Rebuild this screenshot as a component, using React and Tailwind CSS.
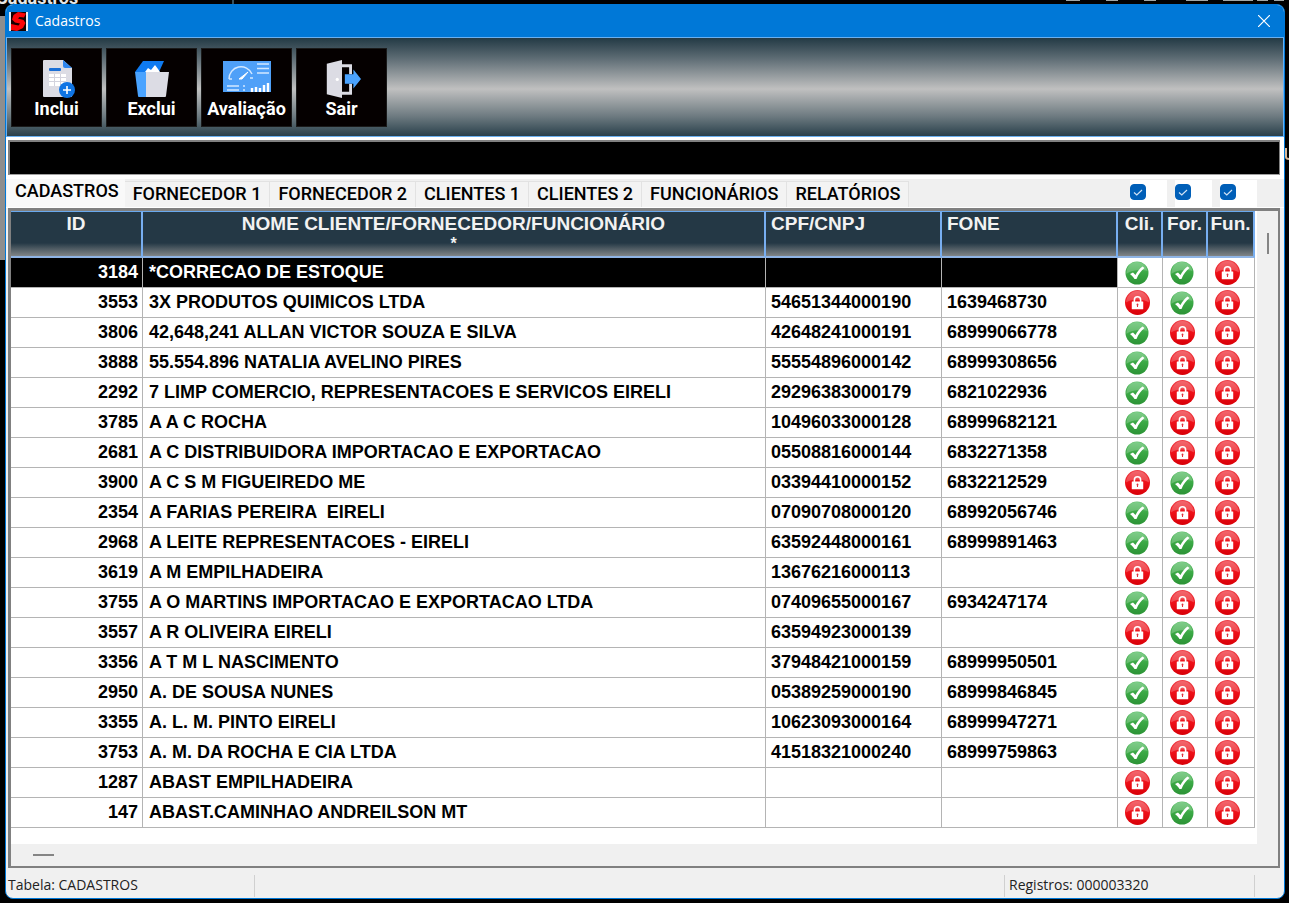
import React, { useState } from 'react';

const tabs = ['CADASTROS', 'FORNECEDOR 1', 'FORNECEDOR 2', 'CLIENTES 1', 'CLIENTES 2', 'FUNCIONÁRIOS', 'RELATÓRIOS'];

// flags: cliente, fornecedor, funcionário
const rows = [
    { id: 3184, name: '*CORRECAO DE ESTOQUE', doc: '', phone: '', flags: [1, 1, 0] },
    { id: 3553, name: '3X PRODUTOS QUIMICOS LTDA', doc: '54651344000190', phone: '1639468730', flags: [0, 1, 0] },
    { id: 3806, name: '42,648,241 ALLAN VICTOR SOUZA E SILVA', doc: '42648241000191', phone: '68999066778', flags: [1, 0, 0] },
    { id: 3888, name: '55.554.896 NATALIA AVELINO PIRES', doc: '55554896000142', phone: '68999308656', flags: [1, 0, 0] },
    { id: 2292, name: '7 LIMP COMERCIO, REPRESENTACOES E SERVICOS EIRELI', doc: '29296383000179', phone: '6821022936', flags: [1, 0, 0] },
    { id: 3785, name: 'A A C ROCHA', doc: '10496033000128', phone: '68999682121', flags: [1, 0, 0] },
    { id: 2681, name: 'A C DISTRIBUIDORA IMPORTACAO E EXPORTACAO', doc: '05508816000144', phone: '6832271358', flags: [1, 0, 0] },
    { id: 3900, name: 'A C S M FIGUEIREDO ME', doc: '03394410000152', phone: '6832212529', flags: [0, 1, 0] },
    { id: 2354, name: 'A FARIAS PEREIRA  EIRELI', doc: '07090708000120', phone: '68992056746', flags: [1, 0, 0] },
    { id: 2968, name: 'A LEITE REPRESENTACOES - EIRELI', doc: '63592448000161', phone: '68999891463', flags: [1, 1, 0] },
    { id: 3619, name: 'A M EMPILHADEIRA', doc: '13676216000113', phone: '', flags: [0, 1, 0] },
    { id: 3755, name: 'A O MARTINS IMPORTACAO E EXPORTACAO LTDA', doc: '07409655000167', phone: '6934247174', flags: [1, 0, 0] },
    { id: 3557, name: 'A R OLIVEIRA EIRELI', doc: '63594923000139', phone: '', flags: [0, 1, 0] },
    { id: 3356, name: 'A T M L NASCIMENTO', doc: '37948421000159', phone: '68999950501', flags: [1, 0, 0] },
    { id: 2950, name: 'A. DE SOUSA NUNES', doc: '05389259000190', phone: '68999846845', flags: [1, 0, 0] },
    { id: 3355, name: 'A. L. M. PINTO EIRELI', doc: '10623093000164', phone: '68999947271', flags: [1, 0, 0] },
    { id: 3753, name: 'A. M. DA ROCHA E CIA LTDA', doc: '41518321000240', phone: '68999759863', flags: [1, 0, 0] },
    { id: 1287, name: 'ABAST EMPILHADEIRA', doc: '', phone: '', flags: [0, 1, 0] },
    { id: 147, name: 'ABAST.CAMINHAO ANDREILSON MT', doc: '', phone: '', flags: [0, 1, 0] },
];

const IncluiIcon = () => (
    <svg viewBox="-4 0 36 38" className="w-9 h-[38px]">
        <path d="M1 0h19l9 8v28a1 1 0 0 1-1 1H1a1 1 0 0 1-1-1V1a1 1 0 0 1 1-1z" fill="#dcdce4" />
        <path d="M20 0l9 8h-7a2 2 0 0 1-2-2z" fill="#2f86ee" />
        <rect x="6" y="8" width="12" height="3" rx="1" fill="#1a6fd6" />
        <path d="M6 14h17v12H6z" fill="#fff" />
        <path d="M6 17.500h17M6 21.500h17M11.500 14v12M17.500 14v12" stroke="#d3d3dd" strokeWidth="1" />
        <circle cx="24" cy="30" r="8" fill="#0f74e4" />
        <path d="M24 26v8M20 30h8" stroke="#fff" strokeWidth="1.600" />
    </svg>
);

const ExcluiIcon = () => (
    <svg viewBox="0 0 36 38" className="w-9 h-[38px]">
        <path d="M9 1h21l-5 11H1z" fill="#0f7af0" />
        <path d="M1 12h11v25H5a1 1 0 0 1-1-1z" fill="#4aa3ff" />
        <path d="M11 12l3-4 3 2 4-5 3 4 2 3z" fill="#fff" />
        <path d="M12 12h23l-3 24a1 1 0 0 1-1 1H12z" fill="#dcdce4" />
    </svg>
);

const AvaliacaoIcon = () => (
    <svg viewBox="0 0 48 38" className="w-12 h-[38px]">
        <rect y="1" width="48" height="31" fill="#4fa0f8" />
        <path d="M6 19a12 12 0 0 1 23-5M6 19h3M27 18h3" fill="none" stroke="#d4e8ff" strokeWidth="1.500" />
        <path d="M16 19l9-7-6 7z" fill="#fff" stroke="#fff" strokeWidth="1" />
        <path d="M34 4h12M34 8.500h12M34 13h12M4 26h12M4 30h12M20 26h2M20 30h2" stroke="#d4e8ff" strokeWidth="1.300" />
        <path d="M29 32v-4M33 32v-5M37 32v-4M41 32v-7M45 32V23" stroke="#fff" strokeWidth="2.400" />
    </svg>
);

const SairIcon = () => (
    <svg viewBox="-4 0 40 40" className="w-[38px] h-[38px]">
        <path d="M16 6h9v29h-9" fill="none" stroke="#dcdce4" strokeWidth="3" />
        <path d="M0 4l16-4v40L0 36z" fill="#dcdce4" />
        <circle cx="11" cy="20.500" r="1.700" fill="#fff" />
        <path d="M19 15h8V8l9 12-9 12v-7h-8z" fill="#000" />
        <path d="M19 15h9v-5l8 10-8 10v-5h-9z" fill="#4aa3ff" />
    </svg>
);

const StatusIcon = ({ ok }) => {
    if (ok) {
        return (
            <svg viewBox="0 0 24 24" className="w-6 h-6" role="img" aria-label="Sim">
                <circle cx="12" cy="12" r="11.500" fill="url(#okFill)" />
                <path d="M1.500 13A10.500 10.500 0 0 1 22.500 10C17 8 6 9 1.500 13z" fill="#fff" opacity=".22" />
                <path d="M5 13l3-1.500 2.500 2.500C12 11 14.500 7.500 17.500 5.500l2 1.500c-3.500 3-6 6-8 11H9.500C8.500 16.500 7 14.500 5 13z" fill="#fff" />
            </svg>
        );
    }
    return (
        <svg viewBox="0 0 24 24" className="w-[25px] h-[25px]" role="img" aria-label="Não">
            <circle cx="12" cy="12" r="12" fill="url(#lockFill)" />
            <path d="M1 12A11 11 0 0 1 23 12C18 8 6 8 1 12z" fill="#fff" opacity=".22" />
            <path d="M9 11.500V9.500a3 3 0 0 1 6 0V11.500" fill="none" stroke="#fff" strokeWidth="1.500" />
            <rect x="6.500" y="11" width="11" height="7.500" rx=".5" fill="#fff" />
            <path d="M12 13a1 1 0 0 1 .5 1.800v1.500h-1v-1.500a1 1 0 0 1 .5-1.800z" fill="#e0323c" />
        </svg>
    );
};

const tools = [
    { label: 'Inclui', Icon: IncluiIcon },
    { label: 'Exclui', Icon: ExcluiIcon },
    { label: 'Avaliação', Icon: AvaliacaoIcon },
    { label: 'Sair', Icon: SairIcon },
];

const headClass = 'h-[47px] p-0 align-top border-t border-b-2 border-r-2 border-t-[#6aa9ee] border-b-[#8fb4e4] border-r-[#78aef0] font-bold whitespace-nowrap overflow-hidden';
const cellClass = 'h-[30px] p-0 border-b border-r border-[#b4b4b4] whitespace-pre overflow-hidden';
const textCell = `${cellClass} pb-[2px]`;

const FilterCheck = ({ label }) => {
    const [checked, setChecked] = useState(true);
    return (
        <label className="w-[37px] h-[27px] pt-1 bg-white flex items-start">
            <span className="grid w-4 h-4">
                <input
                    type="checkbox"
                    aria-label={label}
                    checked={checked}
                    onChange={() => setChecked(!checked)}
                    className="col-start-1 row-start-1 appearance-none w-4 h-4 rounded border border-[#005fb8] bg-white checked:bg-[#005fb8]"
                />
                {checked && (
                    <svg viewBox="0 0 16 16" className="col-start-1 row-start-1 w-4 h-4 pointer-events-none">
                        <path d="M4 8.500l2.800 2.500L12 6" fill="none" stroke="#cfe2f5" strokeWidth="1.200" />
                    </svg>
                )}
            </span>
        </label>
    );
};

export default function App() {
    const [activeTab, setActiveTab] = useState('CADASTROS');
    const [selected, setSelected] = useState(3184);

    return (
        <div className="relative min-h-screen bg-black flex flex-col pt-1 pb-1 pl-[5px] pr-1 overflow-hidden font-['Liberation_Sans',sans-serif]">
            <svg width="0" height="0" className="absolute">
                <defs>
                    <linearGradient id="okFill" x1="0" y1="0" x2="0" y2="1">
                        <stop offset="0" stopColor="#5dc06a" />
                        <stop offset=".5" stopColor="#3aa844" />
                        <stop offset="1" stopColor="#2c9336" />
                    </linearGradient>
                    <linearGradient id="lockFill" x1="0" y1="0" x2="0" y2="1">
                        <stop offset="0" stopColor="#ee4048" />
                        <stop offset=".5" stopColor="#ee1018" />
                        <stop offset="1" stopColor="#d80008" />
                    </linearGradient>
                </defs>
            </svg>

            {/* parent window peeking out behind the dialog */}
            <div className="absolute left-0 top-4 w-3 h-[244px] bg-[#8e8e8e]"></div>
            <div className="absolute -left-1 -top-3 w-[238px] h-5 border-r-2 border-[#35505c] text-[#e6e6e6] text-lg leading-5 font-bold font-[Roboto,sans-serif]" aria-hidden="true">Cadastros</div>
            <svg viewBox="0 0 225 2" className="absolute top-0 right-0 w-[225px] h-[2px]">
                <path d="M2 0h14M42 0h12M80 0h12M122 0h22M159 0h30M193 0h11M210 0h10" stroke="#a0a6a6" strokeWidth="2" />
            </svg>
            <svg viewBox="0 0 5 14" className="absolute top-[147px] right-0 w-[5px] h-[14px]">
                <path d="M2 1v9q0 2 3 2" fill="none" stroke="#d9b99a" strokeWidth="2" />
            </svg>

            <div className="relative flex-1 flex flex-col rounded-lg overflow-hidden border border-[#0078d7] bg-[#f0f0f0]">
                <header className="h-8 shrink-0 bg-[#0078d7] flex items-center pl-[3px] pr-[14px] text-white">
                    <svg viewBox="0 0 19 19" className="w-[19px] h-[19px]">
                        <rect width="19" height="19" fill="#e8eef4" />
                        <rect x="2" width="15" height="19" fill="#140000" />
                        <path d="M17 1.500L9 0 4.500 3 3 7.500l3 3 5 1-1.500 2L2 12v6l6 1 6-3 2.500-5-2-3L9 6.500l1.500-1.500L15 5.500z" fill="#fa0408" />
                    </svg>
                    <h1 className="ml-[7px] text-sm font-['Open_Sans',sans-serif]">Cadastros</h1>
                    <button className="ml-auto" aria-label="Fechar">
                        <svg viewBox="0 0 12 12" className="w-3 h-3">
                            <path d="M0 0l12 12M12 0L0 12" stroke="#fff" strokeWidth="1.200" />
                        </svg>
                    </button>
                </header>

                <div className="h-[100px] shrink-0 border border-[#6ab0f0] bg-[linear-gradient(to_bottom,#233a45,#5b6a72_20%,#c0c0c0_52%,#6d7a80_80%,#29404b)] flex gap-1 pt-[10px] pl-1">
                    {tools.map(({ label, Icon }) => (
                        <button key={label} className="w-[91px] h-[79px] bg-[#050000] border border-[#1a1a1a] flex flex-col items-center text-white">
                            <span className="h-[49px] flex items-end"><Icon /></span>
                            <span className="-mt-px text-lg leading-6 font-bold font-[Roboto,sans-serif]">{label}</span>
                        </button>
                    ))}
                </div>

                <div className="shrink-0 bg-white pt-[3px] pl-[2px] pr-1 pb-1">
                    <div className="h-[35px] bg-black border-2 border-r border-b border-[#808080] border-b-[#a0a0a0]"></div>
                </div>

                <div className="flex h-[29px] shrink-0 items-end pl-px pr-[27px] border-b border-white">
                    <div role="tablist" className="flex items-end h-full text-lg leading-6 font-medium font-[Roboto,sans-serif] text-black">
                        {tabs.map((tab) => (
                            <button
                                key={tab}
                                role="tab"
                                aria-selected={activeTab === tab}
                                onClick={() => setActiveTab(tab)}
                                className={activeTab === tab
                                    ? 'h-full pl-2 pr-1.5 pb-[5px] bg-[#f9f9f9]'
                                    : 'h-[26px] px-2 pb-[3px] border-r border-t border-[#e2e2e2] bg-[#f3f3f3]'}
                            >
                                {tab}
                            </button>
                        ))}
                    </div>
                    <div className="ml-auto flex gap-2">
                        <FilterCheck label="Cli." />
                        <FilterCheck label="For." />
                        <FilterCheck label="Fun." />
                    </div>
                </div>

                <main className="flex-1 flex flex-col ml-[2px] mr-1 mb-[5px] border-t-[3px] border-l-[3px] border-r-2 border-b-2 border-[#808080] bg-[#f0f0f0]">
                    <div className="flex-1 flex">
                        <div className="flex-1 bg-white pr-[2px]">
                            <table className="w-full table-fixed border-separate border-spacing-0 text-lg leading-6 font-bold text-black">
                                <colgroup>
                                    <col className="w-[132px]" />
                                    <col />
                                    <col className="w-44" />
                                    <col className="w-44" />
                                    <col className="w-[45px]" />
                                    <col className="w-[45px]" />
                                    <col className="w-[47px]" />
                                </colgroup>
                                <thead className="text-[19px] text-[#f2f2f2] bg-[linear-gradient(to_bottom,#243845_68%,#4d5a62_80%,#8e9090)]">
                                    <tr>
                                        <th className={headClass}>ID</th>
                                        <th className={headClass}>
                                            NOME CLIENTE/FORNECEDOR/FUNCIONÁRIO
                                            <span className="block text-base leading-4">*</span>
                                        </th>
                                        <th className={`${headClass} text-left pl-[5px]`}>CPF/CNPJ</th>
                                        <th className={`${headClass} text-left pl-[5px]`}>FONE</th>
                                        <th className={headClass}>Cli.</th>
                                        <th className={headClass}>For.</th>
                                        <th className={headClass}>Fun.</th>
                                    </tr>
                                </thead>
                                <tbody>
                                    {rows.map((row) => {
                                        const dark = row.id === selected ? 'bg-black text-white' : '';
                                        return (
                                            <tr key={row.id} onClick={() => setSelected(row.id)}>
                                                <td className={`${textCell} text-right pr-1 ${dark}`}>{row.id}</td>
                                                <td className={`${textCell} pl-[6px] ${dark}`}>{row.name}</td>
                                                <td className={`${textCell} pl-[5px] ${dark}`}>{row.doc}</td>
                                                <td className={`${textCell} pl-[5px] ${dark}`}>{row.phone}</td>
                                                {row.flags.map((flag, i) => (
                                                    <td key={i} className={`${cellClass} pl-[7px]`}>
                                                        <StatusIcon ok={flag === 1} />
                                                    </td>
                                                ))}
                                            </tr>
                                        );
                                    })}
                                </tbody>
                            </table>
                        </div>
                        <div className="w-[21px] shrink-0 flex justify-center pt-[22px]">
                            <div className="w-[2px] h-[21px] bg-[#858585]"></div>
                        </div>
                    </div>
                    <div className="h-[22px] shrink-0 flex items-center pl-[22px]">
                        <div className="w-[21px] h-[2px] bg-[#858585]"></div>
                    </div>
                </main>

                <footer className="h-[25px] shrink-0 flex items-center text-sm leading-5 text-[#222] font-['Open_Sans',sans-serif]">
                    <div className="w-[249px] h-[22px] pl-[2px] border-r border-[#d0d0d0]">Tabela: CADASTROS</div>
                    <div className="flex-1 h-[22px] border-r border-[#d0d0d0]"></div>
                    <div className="w-[250px] h-[22px] pl-1 border-r border-[#d0d0d0]">Registros: 000003320</div>
                    <div className="w-[29px]"></div>
                </footer>
            </div>
        </div>
    );
}
